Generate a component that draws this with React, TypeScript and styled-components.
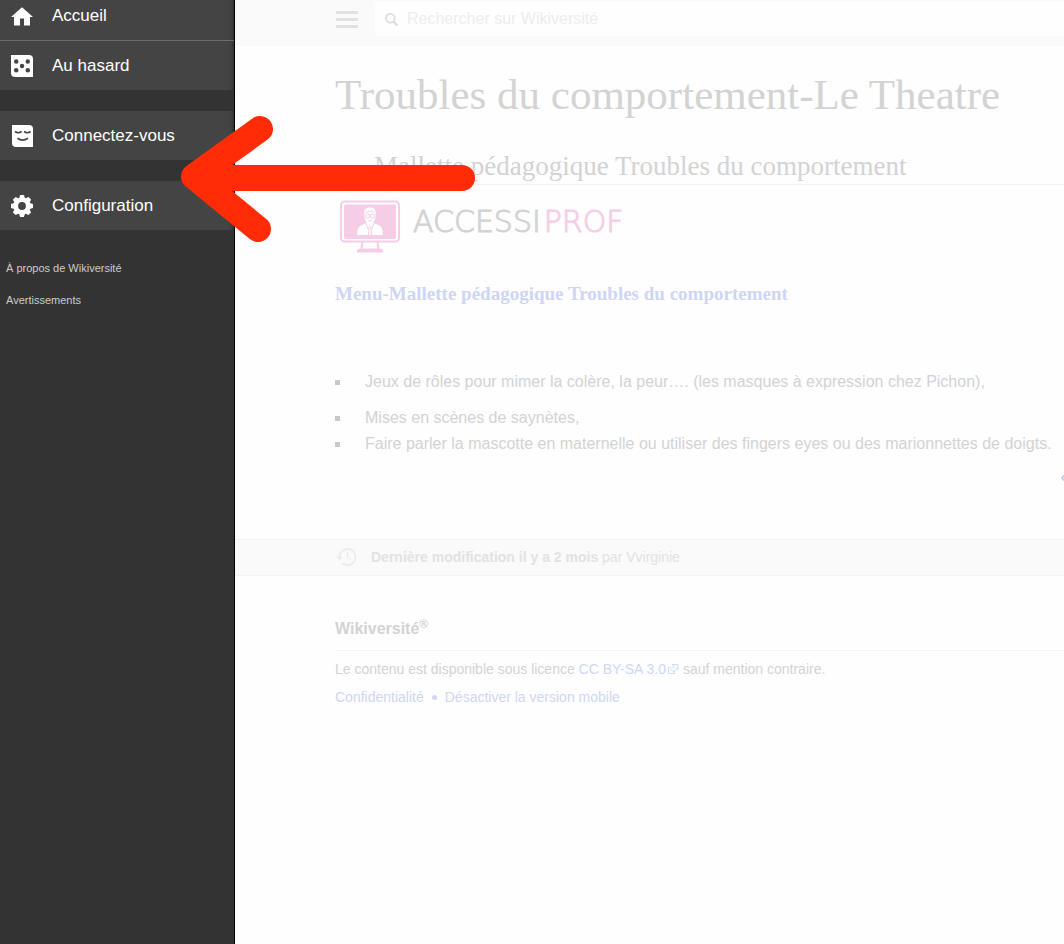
import React from 'react';
import styled, { createGlobalStyle } from 'styled-components';

const Global = createGlobalStyle`
  *, *::before, *::after { box-sizing: border-box; }
  body {
    margin: 0;
    background: #fefefe;
    font-family: "Liberation Sans", Arial, sans-serif;
    overflow-x: hidden;
  }
`;

const colors = {
  text: '#d3d3d3',
  faint: '#e2e2e2',
  link: '#ced6f4',
  line: '#f3f3f3',
  band: '#fafafa',
  pink: '#f6cde6',
};

const Page = styled.div`
  position: relative;
  display: flex;
  min-height: 100vh;
  overflow: hidden;
`;

const Sidebar = styled.nav`
  flex: 0 0 235px;
  background: #333;
  border-right: 1px solid #000;
  color: #fff;
`;

const MenuGroups = styled.div`
  display: flex;
  flex-direction: column;
  gap: 21px;
  margin-top: -9px;
`;

const MenuList = styled.ul`
  list-style: none;
  margin: 0;
  padding: 0;
  background: #444;
  box-shadow: inset -5px 0 5px -5px rgba(0, 0, 0, 0.5);

  li + li { border-top: 1px solid #6c6c6c; }
`;

const MenuLink = styled.a`
  display: flex;
  align-items: center;
  gap: 19px;
  height: 49px;
  padding-left: 11px;
  color: #fff;
  font-size: 17px;
  line-height: 20px;
  text-decoration: none;
`;

const AboutList = styled.ul`
  list-style: none;
  display: flex;
  flex-direction: column;
  gap: 16px;
  margin: 30px 0 0;
  padding: 0 6px;
  font-size: 11px;
  line-height: 16px;

  a { color: #ccc; text-decoration: none; }
`;

const Main = styled.div`
  flex: 1 1 0;
  min-width: 0;
  color: ${colors.text};
`;

const Header = styled.header`
  display: flex;
  align-items: flex-start;
  height: 46px;
  padding: 2px 0 0 100px;
  background: ${colors.band};
`;

const MenuButton = styled.button`
  display: flex;
  flex-direction: column;
  gap: 4px;
  width: 24px;
  margin: 9px 16px 0 0;
  padding: 0 1px;
  border: 0;
  background: none;

  span { height: 3px; background: #e1e1e1; }
`;

const SearchBox = styled.label`
  flex: 1;
  display: flex;
  align-items: center;
  gap: 9px;
  height: 34px;
  padding-left: 10px;
  border-radius: 2px 0 0 2px;
  background: #fefefe;
`;

const SearchInput = styled.input`
  flex: 1;
  min-width: 0;
  padding: 0;
  border: 0;
  outline: 0;
  background: none;
  font: 16px/20px "Liberation Sans", Arial, sans-serif;

  &::placeholder { color: #ededed; opacity: 1; }
`;

const Article = styled.main`
  padding: 22px 0 0 100px;
  font-size: 16px;
  line-height: 26px;
  white-space: nowrap;
`;

const Title = styled.h1`
  margin: 0;
  font: 43px/54px "Liberation Serif", "Times New Roman", serif;
`;

const Subtitle = styled.h2`
  margin: 27px 0 0;
  padding: 0 0 1px 39px;
  border-bottom: 1px solid ${colors.line};
  font: 27px/34px "Liberation Serif", "Times New Roman", serif;
`;

const Logo = styled.div`
  display: flex;
  align-items: flex-start;
  gap: 13px;
  height: 54px;
  margin: 15px 0 0 5px;
`;

const LogoText = styled.span`
  display: flex;
  gap: 3px;
  padding-top: 4px;
  font: 200 30px/36px "DejaVu Sans", sans-serif;
  -webkit-text-stroke: 1px currentColor;

  b { color: ${colors.pink}; font-weight: 200; }
`;

const MenuTitle = styled.h3`
  margin: 27px 0 0;
  font: bold 19px/26px "Liberation Serif", "Times New Roman", serif;

  a { color: ${colors.link}; text-decoration: none; }
`;

const Bullets = styled.ul`
  list-style: none;
  margin: 62px 0 0;
  padding: 0;
`;

const Bullet = styled.li<{ $spaced?: boolean }>`
  display: flex;
  align-items: center;
  gap: 25px;
  margin-bottom: ${(p) => (p.$spaced ? 10 : 0)}px;

  &::before {
    content: "";
    width: 5px;
    height: 5px;
    background: #c9c9c9;
  }
`;

const NextPage = styled.div`
  display: flex;
  justify-content: flex-end;
  align-items: center;
  height: 26px;
  margin-top: 8px;

  a { display: flex; }
`;

const LastEdit = styled.a`
  display: flex;
  align-items: center;
  gap: 14px;
  height: 37px;
  margin-top: 48px;
  padding: 0 0 2px 101px;
  border: solid ${colors.line};
  border-width: 1px 0;
  background: ${colors.band};
  color: ${colors.faint};
  font-size: 14px;
  line-height: 18px;
  text-decoration: none;
`;

const Footer = styled.footer`
  padding: 40px 0 0 100px;
  font-size: 14px;
  line-height: 28px;
  white-space: nowrap;

  a { color: ${colors.link}; text-decoration: none; }
  p { margin: 0; }
`;

const FooterTitle = styled.h2`
  margin: 0 0 4px;
  padding-bottom: 8px;
  border-bottom: 1px solid ${colors.line};
  font-size: 16px;
  line-height: 26px;

  sup { font-size: 12px; line-height: 0; }
`;

const FooterLinks = styled.div`
  display: flex;
  align-items: center;
  gap: 8px;

  i { width: 5px; height: 5px; border-radius: 50%; background: ${colors.link}; }
`;

const Pointer = styled.svg`
  position: absolute;
  left: 180px;
  top: 114px;
  pointer-events: none;
`;

const HomeIcon = () => (
  <svg width="22" height="22" viewBox="0 0 22 22" fill="#fff" aria-hidden="true">
    <path d="M11 2.200 0 12h3v8.500h6v-7h4v7h6V12h3z" />
  </svg>
);

const DiceIcon = () => (
  <svg width="22" height="22" viewBox="0 0 22 22" aria-hidden="true">
    <path fill="#fff" d="M0 0h18a4 4 0 0 1 4 4v18H4a4 4 0 0 1-4-4z" />
    <g fill="#444">
      <circle cx="5.2" cy="6.5" r="2.2" />
      <circle cx="16.8" cy="6.5" r="2.2" />
      <circle cx="11" cy="11" r="2.2" />
      <circle cx="5.2" cy="15.3" r="2.2" />
      <circle cx="16.8" cy="15.3" r="2.2" />
    </g>
  </svg>
);

const FaceIcon = () => (
  <svg width="22" height="22" viewBox="0 0 22 22" aria-hidden="true">
    <path fill="#fff" d="M1 0h17a4 4 0 0 1 4 4v18H5a4 4 0 0 1-4-4z" />
    <path
      d="M4 6.500q3.300 2.500 6.600 0M13 6.500q3.300 2.500 6.600 0M6.500 13.300q5 3.600 10.500 0"
      fill="none"
      stroke="#444"
      strokeWidth="1.7"
    />
  </svg>
);

const GearIcon = () => (
  <svg width="22" height="22" viewBox="-11 -11 22 22" aria-hidden="true">
    <g fill="#fff">
      {[0, 45, 90, 135].map((a) => (
        <path key={a} transform={`rotate(${a})`} d="M-1.900-11h3.800l1.300 4v14l-1.300 4h-3.800l-1.300-4v-14z" />
      ))}
      <circle r="8.600" />
    </g>
    <circle r="3.900" fill="#444" />
  </svg>
);

const SearchIcon = () => (
  <svg width="13" height="13" viewBox="0 0 13 13" fill="none" stroke="#dedede" aria-hidden="true">
    <circle cx="5.300" cy="5.300" r="4.400" strokeWidth="1.700" />
    <path d="m8.500 8.500 4 4" strokeWidth="2.200" />
  </svg>
);

const MonitorLogo = () => (
  <svg width="60" height="54" viewBox="0 0 60 54" aria-hidden="true">
    <rect x="1" y="1.500" width="58" height="40" rx="3.500" fill="#fefefe" stroke={colors.pink} strokeWidth="2" />
    <rect x="4" y="4.500" width="52" height="34.500" rx="2" fill={colors.pink} />
    <path
      d="M22.500 42 21.500 49M37.500 42l1 7M18 51.500q0-2 3-2h18q3 0 3 2z"
      fill="none"
      stroke={colors.pink}
      strokeWidth="2"
    />
    <path
      fill="#fefefe"
      d="M17.300 35v-3q0-5 4-6.700l5-2.300h7.400l5 2.300q4 1.700 4 6.700v3z"
    />
    <path fill="#fefefe" d="M24.500 14c-1-4 1.500-6.500 5.500-6.500s6.500 2.500 5.500 6.500c.5 5-2 10-5.500 10s-6-5-5.500-10z" />
    <g fill="none" stroke={colors.pink}>
      <circle cx="27.600" cy="16.200" r="2" />
      <circle cx="32.400" cy="16.200" r="2" />
      <path d="M25.500 13q3-2.200 5-2 3 .5 4 2M28 20.500q2 1 4 0M26 23.500l2 5.500 2-3 2 3 2-5.500M29 28l-.5 7M31 28l.5 7" />
    </g>
  </svg>
);

const HistoryIcon = () => (
  <svg width="21" height="20" viewBox="0 0 21 20" fill="none" stroke="#ececec" strokeWidth="1.800" aria-hidden="true">
    <path d="M3.500 10a8 8 0 1 1 2.700 6" />
    <path d="M11.500 5v5.500l3.500 2" strokeWidth="1.200" />
    <path d="M0 9.500h7l-3.500 4z" fill="#ececec" stroke="none" />
  </svg>
);

const ExternalIcon = () => (
  <svg width="13" height="10" viewBox="0 0 13 10" fill="none" stroke="#cfdcf6" aria-hidden="true">
    <path d="M5 3.500H2.500v6h6V7" />
    <path d="M6 .5h6V6l-1.700-1.700L7 7.500l-2-2 3.200-3.300z" />
  </svg>
);

const EdgeIcon = () => (
  <svg width="3" height="8" viewBox="0 0 3 8" fill="none" stroke="#b9c5f2" strokeWidth="1.500" aria-hidden="true">
    <path d="M3 1.500 1 4l2 2.500" />
  </svg>
);

export default function App() {
  return (
    <>
      <Global />
      <Page>
        <Sidebar aria-label="Menu principal">
          <MenuGroups>
            <MenuList>
              <li><MenuLink href="#accueil"><HomeIcon />Accueil</MenuLink></li>
              <li><MenuLink href="#hasard"><DiceIcon />Au hasard</MenuLink></li>
            </MenuList>
            <MenuList>
              <li><MenuLink href="#connexion"><FaceIcon />Connectez-vous</MenuLink></li>
            </MenuList>
            <MenuList>
              <li><MenuLink href="#configuration"><GearIcon />Configuration</MenuLink></li>
            </MenuList>
          </MenuGroups>
          <AboutList>
            <li><a href="#apropos">À propos de Wikiversité</a></li>
            <li><a href="#avertissements">Avertissements</a></li>
          </AboutList>
        </Sidebar>

        <Main>
          <Header>
            <MenuButton type="button" aria-label="Ouvrir le menu">
              <span /><span /><span />
            </MenuButton>
            <SearchBox>
              <SearchIcon />
              <SearchInput type="search" placeholder="Rechercher sur Wikiversité" aria-label="Rechercher" />
            </SearchBox>
          </Header>

          <Article>
            <Title>Troubles du comportement-Le Theatre</Title>
            <Subtitle>Mallette pédagogique Troubles du comportement</Subtitle>
            <Logo>
              <MonitorLogo />
              <LogoText><span>ACCESSI</span><b>PROF</b></LogoText>
            </Logo>
            <MenuTitle><a href="#menu">Menu-Mallette pédagogique Troubles du comportement</a></MenuTitle>
            <Bullets>
              <Bullet $spaced>Jeux de rôles pour mimer la colère, la peur…. (les masques à expression chez Pichon),</Bullet>
              <Bullet>Mises en scènes de saynètes,</Bullet>
              <Bullet>Faire parler la mascotte en maternelle ou utiliser des fingers eyes ou des marionnettes de doigts.</Bullet>
            </Bullets>
            <NextPage><a href="#retour" aria-label="Retour"><EdgeIcon /></a></NextPage>
          </Article>

          <LastEdit href="#historique">
            <HistoryIcon />
            <span><strong>Dernière modification il y a 2 mois</strong> par Vvirginie</span>
          </LastEdit>

          <Footer>
            <FooterTitle>Wikiversité<sup>®</sup></FooterTitle>
            <p>
              Le contenu est disponible sous licence <a href="#licence">CC BY-SA 3.0<ExternalIcon /></a> sauf mention contraire.
            </p>
            <FooterLinks>
              <a href="#confidentialite">Confidentialité</a>
              <i />
              <a href="#bureau">Désactiver la version mobile</a>
            </FooterLinks>
          </Footer>
        </Main>

        <Pointer width="300" height="130" viewBox="180 114 300 130" aria-hidden="true">
          <path
            d="M260 129 194 176.500 258 229M196 178H462"
            fill="none"
            stroke="#ff2c07"
            strokeWidth="26"
            strokeLinecap="round"
            strokeLinejoin="round"
          />
        </Pointer>
      </Page>
    </>
  );
}
